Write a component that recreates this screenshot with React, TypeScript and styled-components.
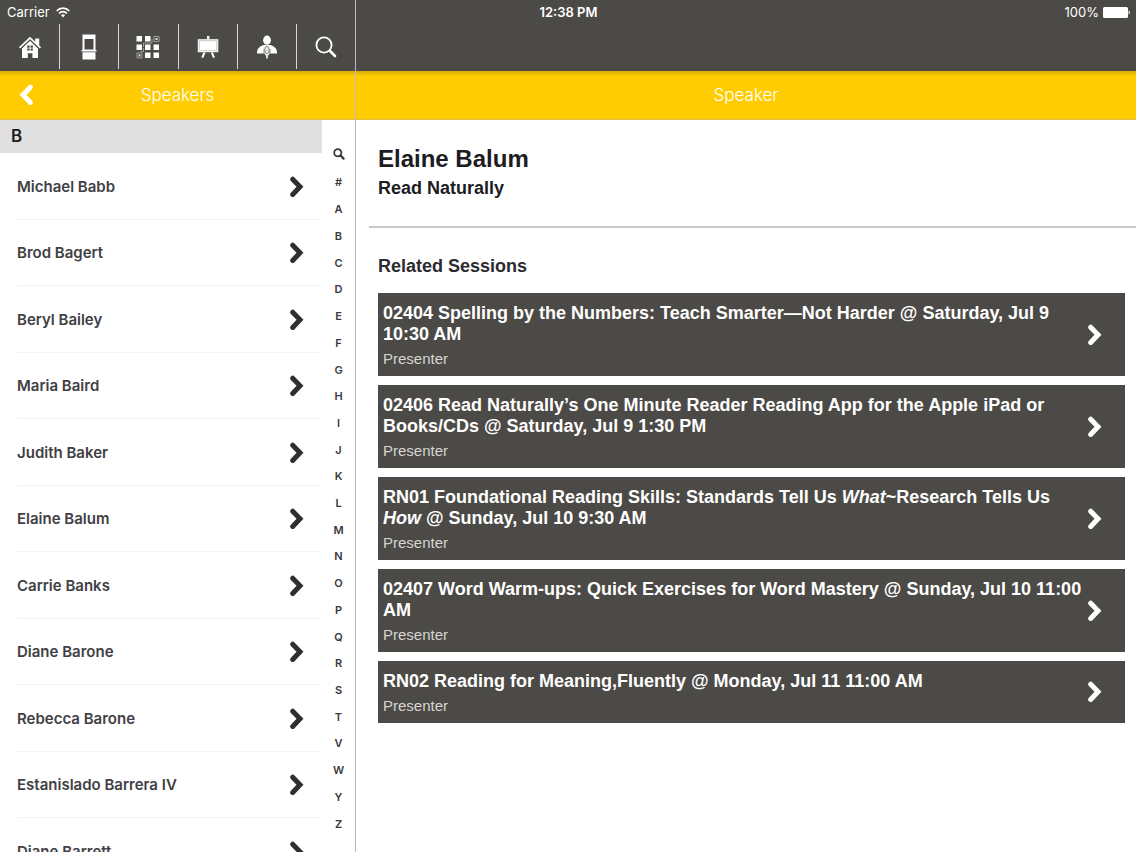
import React from "react";
import styled, { createGlobalStyle } from "styled-components";

const dark = "#4c4a46";
const yellow = "#ffcc02";
const uiFont = `Inter, "Noto Sans", sans-serif`;
const bodyFont = `"Liberation Sans", Arial, sans-serif`;

const GlobalStyle = createGlobalStyle`
  * { box-sizing: border-box; }
  body { margin: 0; background: #fff; font-family: ${uiFont}; }
  h1, h2, h3, p, ul { margin: 0; padding: 0; }
  ul { list-style: none; }
  button { border: 0; padding: 0; background: none; color: inherit; font: inherit; cursor: pointer; }
  a { color: inherit; text-decoration: none; }
  svg { display: block; flex: none; }
`;

const Shell = styled.div`
  position: relative;
  display: grid;
  grid-template-columns: 356px minmax(0, 1fr);
  height: 100vh;
  overflow: hidden;
`;

const StatusBar = styled.div`
  position: absolute;
  inset: 0 0 auto 0;
  display: grid;
  grid-template-columns: 1fr auto 1fr;
  align-items: center;
  height: 24px;
  padding: 0 6px 0 7px;
  color: #fff;
  font-size: 13px;
  line-height: 16px;
  pointer-events: none;
`;

const StatusGroup = styled.div<{ $end?: boolean }>`
  display: flex;
  align-items: center;
  gap: ${(p) => (p.$end ? 4 : 6)}px;
  justify-content: ${(p) => (p.$end ? "flex-end" : "flex-start")};
`;

const Clock = styled.time`
  font-weight: 600;
`;

const Pane = styled.div<{ $divided?: boolean }>`
  display: flex;
  flex-direction: column;
  min-height: 0;
  border-right: ${(p) => (p.$divided ? "1px solid #bdbbbf" : "0")};
`;

const TopBar = styled.header`
  display: flex;
  flex: none;
  height: 71px;
  padding-top: 24px;
  background: ${dark};
`;

const Tools = styled.nav`
  display: grid;
  flex: 1;
  grid-template-columns: repeat(6, 1fr);
  height: 45px;
`;

const Tool = styled.button`
  display: grid;
  place-items: center;
  color: #fff;

  & + & {
    border-left: 1px solid #d8d7d5;
  }
`;

const TitleBar = styled.div`
  display: grid;
  flex: none;
  grid-template-columns: 52px 1fr 52px;
  align-items: center;
  height: 49px;
  background: linear-gradient(#d9a90a, ${yellow} 5px);
  border-bottom: 1px solid #e3c04a;
  color: #fff;
`;

const BarTitle = styled.h2`
  grid-column: 2;
  font-size: 17px;
  font-weight: 300;
  line-height: 24px;
  text-align: center;
`;

const BackButton = styled.button`
  display: grid;
  place-items: center;
  height: 48px;
`;

const Columns = styled.div`
  display: grid;
  flex: 1;
  grid-template-columns: minmax(0, 1fr) 33px;
  min-height: 0;
`;

const SpeakerList = styled.div`
  overflow-y: auto;
  scrollbar-width: none;
`;

const Letter = styled.h3`
  height: 33px;
  padding-left: 11px;
  background: #e1e0e1;
  color: #1c1c1e;
  font-size: 17px;
  font-weight: 600;
  line-height: 33px;
`;

const SpeakerItem = styled.li`
  height: 67px;
  padding: 0 2px 0 17px;

  &:nth-child(even) {
    height: 66px;
  }
`;

const SpeakerLink = styled.a`
  display: flex;
  align-items: center;
  justify-content: space-between;
  height: 100%;
  padding: 1px 16px 0 0;
  border-bottom: 1px solid #f3f2f4;
  color: #414044;
  font-size: 15px;
  font-weight: 600;
  line-height: 20px;
`;

const IndexBar = styled.nav`
  display: flex;
  flex-direction: column;
  min-height: 0;
  padding: 20px 0 15px;
  color: #3a393c;
  font-size: 11px;
  font-weight: 600;
  line-height: 14px;
`;

const IndexLink = styled.a<{ $fixed?: boolean }>`
  display: grid;
  flex: ${(p) => (p.$fixed ? "0 0 28px" : "1 1 0")};
  place-items: center;
`;

const Detail = styled.main`
  flex: 1;
  overflow-y: auto;
  scrollbar-width: none;
  color: #1d1c1f;
  font-family: ${bodyFont};
`;

const Profile = styled.section`
  margin-left: 13px;
  padding: 25px 9px 27px;
  border-bottom: 2px solid #c9c9cb;
`;

const Name = styled.h1`
  font-size: 24px;
  line-height: 28px;
`;

const Organization = styled.p`
  margin-top: 4px;
  font-size: 18px;
  font-weight: 700;
  line-height: 22px;
`;

const Related = styled.section`
  padding: 27px 11px 24px 22px;
`;

const RelatedTitle = styled.h3`
  color: #2c2b2f;
  font-size: 18px;
  line-height: 22px;
`;

const Sessions = styled.ul`
  display: grid;
  gap: 9px;
  margin-top: 16px;
`;

const SessionCard = styled.a`
  display: flex;
  align-items: center;
  gap: 2px;
  padding: 0 23px 0 5px;
  background: ${dark};
  color: #fff;
`;

const SessionText = styled.div`
  flex: 1;
  min-width: 0;
  padding: 10px 0 7px;
`;

const SessionTitle = styled.p`
  font-size: 18px;
  font-weight: 700;
  line-height: 21px;
`;

const Role = styled.p`
  margin-top: 4px;
  color: #d6d5d3;
  font-size: 15px;
  line-height: 20px;
`;

function Chevron({ color, back }: { color: string; back?: boolean }) {
  return (
    <svg width="15" height="22" viewBox="0 0 15 22" fill="none" aria-hidden="true">
      <path
        d={back ? "M11.3 3.2 L4 10.8 L11.3 18.4" : "M3.7 3.2 L11 10.8 L3.7 18.4"}
        stroke={color}
        strokeWidth="5"
        strokeLinecap="round"
      />
    </svg>
  );
}

const HomeIcon = () => (
  <svg width="24" height="24" viewBox="0 0 24 24" aria-hidden="true">
    <path d="M12 4.500l8 8v10.500H4V12.500z" fill="#fff" />
    <path d="M2 14L12 4.300 22 14" fill="none" stroke={dark} strokeWidth="2.200" />
    <path d="M17.200 3.500h4v8.500l-4-4z" fill="#fff" />
    <path d="M1.500 12.800L12 2.800l10.500 10" fill="none" stroke="#fff" strokeWidth="1.700" />
    <path
      d="M9.200 10.500h2.400v2.200H9.200zM12.500 10.500h2.400v2.200h-2.400zM9.200 13.500h2.400v2H9.200zM12.500 13.500h2.400v2h-2.400zM9.800 18.300h4.600V23H9.800z"
      fill={dark}
    />
  </svg>
);

const KioskIcon = () => (
  <svg width="18" height="26" viewBox="0 0 18 26" aria-hidden="true">
    <path fillRule="evenodd" d="M2.500 .5h13v16h-13zM4.500 5v10.500h9V5z" fill="#fff" />
    <path d="M1.500 16h15v1.600h-15zM2.500 18.300h13v7.200h-13z" fill="#fff" />
  </svg>
);

const GridIcon = () => (
  <svg width="24" height="24" viewBox="0 0 24 24" aria-hidden="true">
    <path
      d="M.5 1h5.500v5.500H.5zM9 1h5.500v5.500H9zM.5 9.500h5.500V15H.5zM9 9.500h5.500V15H9zM17.500 9.500H23V15h-5.500zM9 17.500h5.500V23H9zM17.500 17.500H23V23h-5.500z"
      fill="#fff"
    />
    <path d="M18 1.500h5v5h-5zM1 18h5v5H1zM7.500 13v3.500h-3M7.500 12V8h8.500V4" fill="none" stroke="#b5b4b1" strokeWidth="0.800" />
    <path d="M19.500 3h2v2h-2zM2.500 19.500h2v2h-2z" fill="#dddcda" />
  </svg>
);

const BoardIcon = () => (
  <svg width="24" height="24" viewBox="0 0 24 24" aria-hidden="true">
    <path d="M11 1h2.400v3H11z" fill="#fff" />
    <path d="M1.800 4.200h20.500v13H1.800z" fill="#fff" />
    <path d="M3.300 5.700h17.500v10H3.300z" fill="none" stroke="#bab9b6" strokeWidth="0.800" />
    <path d="M8.500 17.500L6.300 22.700M15.800 17.500l2.200 5.200" stroke="#fff" strokeWidth="2" />
  </svg>
);

const SpeakerIcon = () => (
  <svg width="24" height="26" viewBox="0 0 24 26" aria-hidden="true">
    <ellipse cx="12" cy="6.200" rx="3.900" ry="4.600" fill="#fff" />
    <path d="M2 19.500c0-4.500 1.500-6.500 6.500-8.500h7c5 2 6.500 4 6.500 8.500z" fill="#fff" />
    <path d="M9 15v3.500c0 2 1 3.200 3 3.200s3-1.200 3-3.200V15" fill="#fff" stroke={dark} strokeWidth="0.700" />
    <ellipse cx="12" cy="16" rx="2.200" ry="3.900" fill="#e9e8e6" stroke="#6b6965" strokeWidth="0.800" />
    <path d="M12 21v3.500" fill="none" stroke="#fff" strokeWidth="1.600" />
  </svg>
);

const SearchIcon = () => (
  <svg width="24" height="24" viewBox="0 0 24 24" fill="none" stroke="#fff" aria-hidden="true">
    <circle cx="10" cy="10" r="7.600" strokeWidth="1.800" />
    <path d="M16 16l5 5" strokeWidth="2.700" strokeLinecap="round" />
  </svg>
);

const SmallSearchIcon = () => (
  <svg width="12" height="12" viewBox="0 0 12 12" fill="none" stroke="#3a393c" aria-hidden="true">
    <circle cx="4.800" cy="4.800" r="3.600" strokeWidth="1.800" />
    <path d="M7.600 7.600l3 3" strokeWidth="2.200" strokeLinecap="round" />
  </svg>
);

const WifiIcon = () => (
  <svg width="14" height="11" viewBox="0 0 14 11" fill="none" stroke="#fff" strokeWidth="1.600" aria-hidden="true">
    <path d="M.7 4C4.200.2 9.800.2 13.300 4" />
    <path d="M3 6.400c2.300-2.400 5.700-2.400 8 0" />
    <path d="M4.900 8.100L7 10.400l2.100-2.300c-1.200-1.100-3-1.100-4.200 0z" fill="#fff" stroke="none" />
  </svg>
);

const BatteryIcon = () => (
  <svg width="27" height="11" viewBox="0 0 27 11" aria-hidden="true">
    <rect x="0" y="0" width="25" height="11" rx="1.500" fill="#fff" />
    <path d="M25.600 3.500c1.600.5 1.600 3.500 0 4z" fill="#fff" />
  </svg>
);

const tools = [
  { label: "Home", icon: <HomeIcon /> },
  { label: "Kiosk", icon: <KioskIcon /> },
  { label: "Floor map", icon: <GridIcon /> },
  { label: "Sessions", icon: <BoardIcon /> },
  { label: "Speakers", icon: <SpeakerIcon /> },
  { label: "Search", icon: <SearchIcon /> },
];

const speakers = [
  "Michael Babb",
  "Brod Bagert",
  "Beryl Bailey",
  "Maria Baird",
  "Judith Baker",
  "Elaine Balum",
  "Carrie Banks",
  "Diane Barone",
  "Rebecca Barone",
  "Estanislado Barrera IV",
  "Diane Barrett",
];

const letters = "ABCDEFGHIJKLMNOPQRSTVWYZ".split("");

const sessions: React.ReactNode[] = [
  "02404 Spelling by the Numbers: Teach Smarter—Not Harder @ Saturday, Jul 9 10:30 AM",
  "02406 Read Naturally’s One Minute Reader Reading App for the Apple iPad or Books/CDs @ Saturday, Jul 9 1:30 PM",
  <>
    RN01 Foundational Reading Skills: Standards Tell Us <em>What</em>~Research Tells Us <em>How</em> @ Sunday, Jul 10
    9:30 AM
  </>,
  "02407 Word Warm-ups: Quick Exercises for Word Mastery @ Sunday, Jul 10 11:00 AM",
  "RN02 Reading for Meaning,Fluently @ Monday, Jul 11 11:00 AM",
];

export default function App() {
  return (
    <>
      <GlobalStyle />
      <Shell>
        <Pane $divided>
          <TopBar>
            <Tools aria-label="Main">
              {tools.map((t) => (
                <Tool key={t.label} type="button" aria-label={t.label}>
                  {t.icon}
                </Tool>
              ))}
            </Tools>
          </TopBar>
          <TitleBar>
            <BackButton type="button" aria-label="Back">
              <Chevron color="#fff" back />
            </BackButton>
            <BarTitle>Speakers</BarTitle>
          </TitleBar>
          <Columns>
            <SpeakerList>
              <Letter id="B">B</Letter>
              <ul>
                {speakers.map((name) => (
                  <SpeakerItem key={name}>
                    <SpeakerLink href="#speaker">
                      {name}
                      <Chevron color="#2f2e31" />
                    </SpeakerLink>
                  </SpeakerItem>
                ))}
              </ul>
            </SpeakerList>
            <IndexBar aria-label="Index">
              <IndexLink $fixed href="#search" aria-label="Search">
                <SmallSearchIcon />
              </IndexLink>
              <IndexLink $fixed href="#number">
                #
              </IndexLink>
              {letters.map((l) => (
                <IndexLink key={l} href={`#${l}`}>
                  {l}
                </IndexLink>
              ))}
            </IndexBar>
          </Columns>
        </Pane>
        <Pane>
          <TopBar />
          <TitleBar>
            <BarTitle>Speaker</BarTitle>
          </TitleBar>
          <Detail id="speaker">
            <Profile>
              <Name>Elaine Balum</Name>
              <Organization>Read Naturally</Organization>
            </Profile>
            <Related>
              <RelatedTitle>Related Sessions</RelatedTitle>
              <Sessions>
                {sessions.map((title, i) => (
                  <li key={i}>
                    <SessionCard href="#session">
                      <SessionText>
                        <SessionTitle>{title}</SessionTitle>
                        <Role>Presenter</Role>
                      </SessionText>
                      <Chevron color="#fff" />
                    </SessionCard>
                  </li>
                ))}
              </Sessions>
            </Related>
          </Detail>
        </Pane>
        <StatusBar>
          <StatusGroup>
            Carrier
            <WifiIcon />
          </StatusGroup>
          <Clock>12:38 PM</Clock>
          <StatusGroup $end>
            100%
            <BatteryIcon />
          </StatusGroup>
        </StatusBar>
      </Shell>
    </>
  );
}
